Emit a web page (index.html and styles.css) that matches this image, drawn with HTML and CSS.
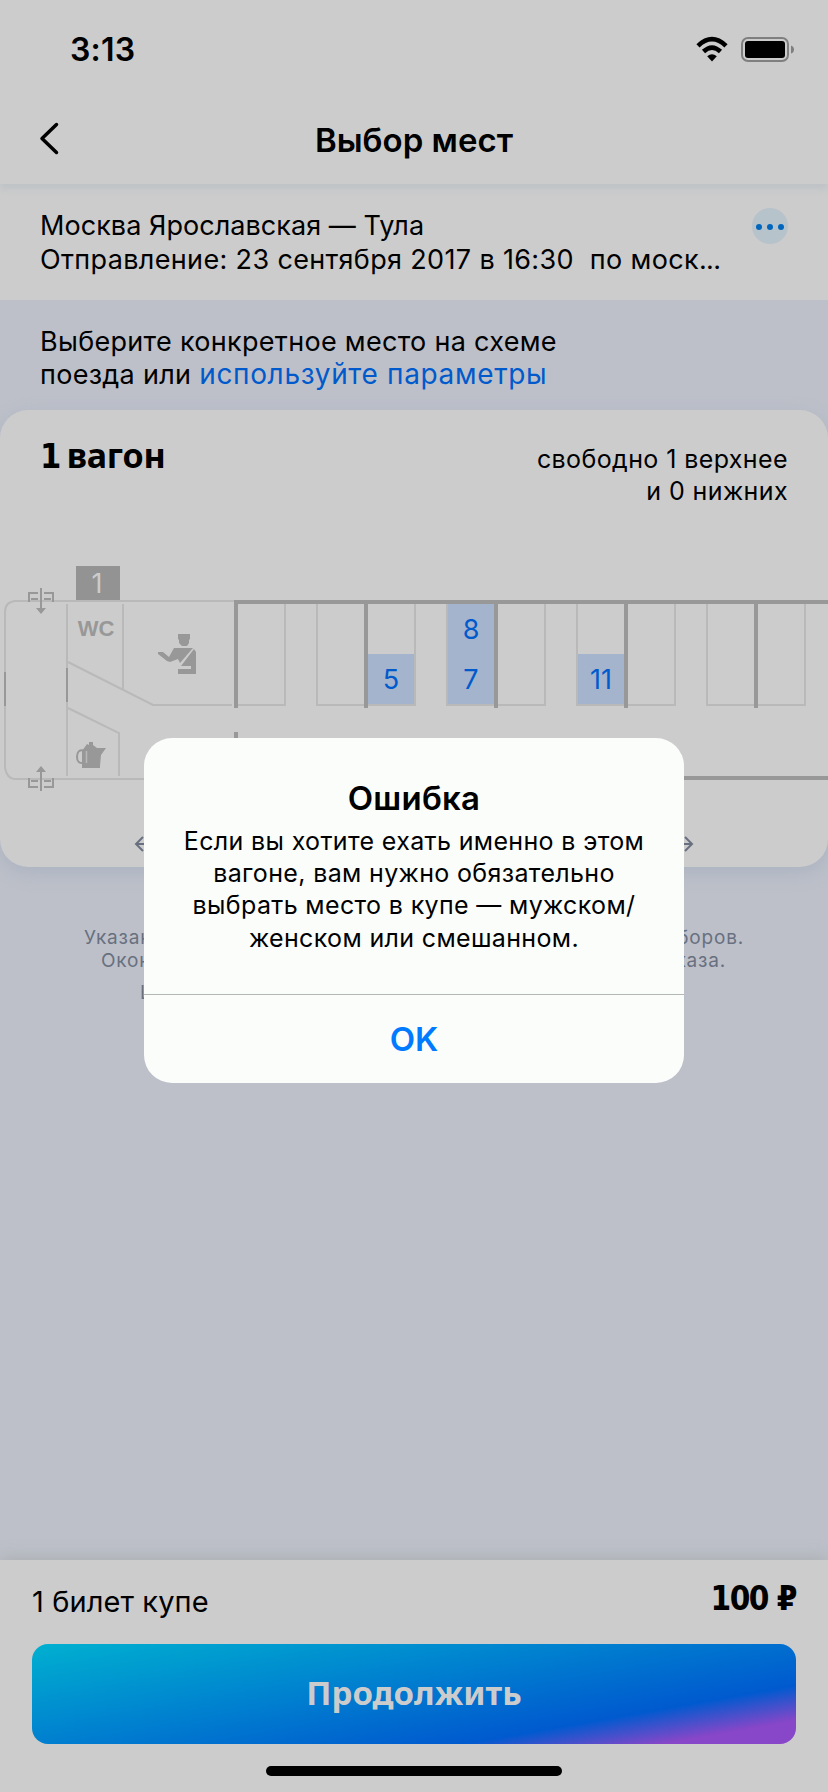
FILE: index.html
```
<!DOCTYPE html>
<html lang="ru">
<head>
<meta charset="utf-8">
<title>Выбор мест</title>
<link rel="stylesheet" href="styles.css">
</head>
<body>
<div class="screen">
  <header class="header">
    <div class="status">
      <span class="time">3:13</span>
      <div class="status-icons">
        <svg width="34" height="26" viewBox="0 0 34 26"><g fill="none" stroke="#000" stroke-width="4.600"><path d="M3 9.800Q17-3.500 31 9.800"/><path d="M8.500 15.500Q17 7.600 25.500 15.500"/></g><path d="M12.200 20.300Q17 16.300 21.800 20.300L17 25.500Z"/></svg>
        <svg width="54" height="26" viewBox="0 0 54 26"><rect x="1" y="2" width="46" height="23" rx="6" fill="none" stroke="#7f7f7f" stroke-width="2"/><rect x="4" y="5" width="40" height="17" rx="3"/><path d="M50 9.500q3 1 3 4t-3 4z" fill="#7f7f7f"/></svg>
      </div>
    </div>
    <div class="nav">
      <svg class="back" width="24" height="36" viewBox="0 0 24 36"><path d="M18.500 3.500L4 17.500L18.500 31.500" fill="none" stroke="#000" stroke-width="3.500" stroke-linecap="round" stroke-linejoin="round"/></svg>
      <h1 class="title">Выбор мест</h1>
    </div>
  </header>

  <section class="trip">
    <div class="trip-text">
      <div class="trip-route">Москва Ярославская — Тула</div>
      <div>Отправление: 23 сентября 2017 в 16:30&nbsp; по моск<span class="dots">...</span></div>
    </div>
    <div class="more"><i class="dot"></i><i class="dot"></i><i class="dot"></i></div>
  </section>

  <section class="hint">
    <div>Выберите конкретное место на схеме</div>
    <div>поезда или <a class="link">используйте параметры</a></div>
  </section>

  <section class="card">
    <div class="card-head">
      <h2 class="wagon"><span class="figure">1</span> вагон</h2>
      <div class="free">свободно 1 верхнее<br>и 0 нижних</div>
    </div>
    <svg class="scheme" width="828" height="327" viewBox="0 540 828 327">
      <!-- free places -->
      <g fill="#a3b4cc"><rect x="368" y="654" width="46" height="50"/><rect x="448" y="604" width="46" height="100"/><rect x="578" y="654" width="46" height="50"/></g>
      <!-- car outline, service rooms and berths -->
      <g fill="none" stroke="#b9b9b9" stroke-width="2">
        <path d="M236 601H15Q5 602 5 612V768Q7 778 14 779H240"/>
        <path d="M67 604V776M123 604V689M68 662L153 705H232M68 708L119 733V776"/>
        <path d="M238 705H285V604M317 604V705H415V604M447 604V705H545V604M577 604V705H675V604M707 604V705H805V604"/>
      </g>
      <!-- compartment walls -->
      <g fill="none" stroke="#989898" stroke-width="4">
        <path d="M236 708V602H828M366 602V708M496 602V708M626 602V708M756 602V708M236 732V778H828"/>
        <path stroke-width="2" d="M5 672V706M67 668V702"/>
      </g>
      <!-- doors -->
      <g fill="none" stroke="#989898" stroke-width="2">
        <path d="M41 588V610M38 593H29V602M31 599H38M44 593H53V602M51 599H44"/>
        <path d="M41 770V791M38 787H29V778M31 781H38M44 787H53V778M51 781H44"/>
      </g>
      <path fill="#989898" d="M36 608H46L41 614ZM36 772H46L41 766Z"/>
      <!-- conductor -->
      <g fill="#989898">
        <path d="M178 634H190V639L189 640V643L187 646H182L179 643V640L178 639Z"/>
        <path d="M174 648H193L180 663L178 659L170 662L167 661L158 654V652H163L169 657Z"/>
        <path d="M194 649L196 652V674H178V669H191V666H181Z"/>
      </g>
      <!-- kettle -->
      <g fill="#989898"><path d="M82 751L87 744L89 745V742H93V745L97 748H106L101 755L100 766V768H82Z"/><path d="M84 750.500Q77 749 77 757Q77 764 84 763" fill="none" stroke="#989898" stroke-width="2"/></g>
      <path d="M86.500 751V763" stroke="#b9b9b9" stroke-width="1.500"/>
      <!-- labels -->
      <rect x="76" y="566" width="44" height="34" fill="#939393"/>
      <text class="tag" x="97" y="593">1</text>
      <text class="wc" x="96" y="636">WC</text>
      <g class="place"><text x="391" y="689">5</text><text x="471" y="639">8</text><text x="471" y="689">7</text><text x="601" y="689">11</text></g>
      <path d="M150 844H136M143 837L136 844L143 851M678 844H692M685 837L692 844L685 851" fill="none" stroke="#687080" stroke-width="2"/>
    </svg>
  </section>

  <section class="notes">
    <div class="note note-a"><span>Указан</span><span>боров.</span></div>
    <div class="note note-b"><span>Окон</span><span>каза.</span></div>
    <div class="note note-c"><span>Ц</span><span>.</span></div>
  </section>

  <footer class="footer">
    <div class="total"><span class="ticket">1 билет купе</span><span class="price">100 ₽</span></div>
    <button class="go">Продолжить</button>
    <div class="home"></div>
  </footer>

  <div class="dialog">
    <h3 class="dialog-title">Ошибка</h3>
    <p class="dialog-text">Если вы хотите ехать именно в этом<br>вагоне, вам нужно обязательно<br>выбрать место в купе — мужском/<br>женском или смешанном.</p>
    <button class="ok">OK</button>
  </div>
</div>
</body>
</html>
```
FILE: styles.css
```
* { box-sizing: border-box; }
body { margin: 0; font-family: Inter, "Liberation Sans", sans-serif; color: #000; }
h1, h2, h3, p { margin: 0; }
button { border: 0; font: inherit; background: none; padding: 0; display: block; width: 100%; }
svg { display: block; }

.screen { position: relative; width: 828px; height: 1792px; background: #bdc0c9; display: flex; flex-direction: column; overflow: hidden; }

.header { height: 184px; background: #ccc; box-shadow: 0 5px 7px rgba(170, 180, 190, .4); position: relative; z-index: 1; }
.status { height: 120px; padding: 30px 33px 0 70px; display: flex; justify-content: space-between; align-items: flex-start; }
.time { font-size: 32px; line-height: 40px; font-weight: 600; letter-spacing: .2px; }
.status-icons { display: flex; gap: 12px; padding-top: 6px; }
.nav { display: grid; grid-template-columns: 62px 1fr 62px; height: 64px; }
.back { margin: 1px 0 0 38px; }
.title { font-size: 33px; line-height: 40px; font-weight: 600; text-align: center; }

.trip { height: 116px; padding: 24px 40px 0 40px; background: #ccc; display: flex; justify-content: space-between; }
.trip-text { padding-top: 1px; font-size: 27px; line-height: 34px; letter-spacing: .35px; white-space: nowrap; }
.trip-route { letter-spacing: .05px; }
.dots { letter-spacing: -.6px; }
.more { width: 36px; height: 36px; border-radius: 50%; background: #b7c3ca; display: flex; align-items: center; justify-content: center; gap: 5px; }
.dot { width: 6px; height: 6px; border-radius: 50%; background: #0065bd; margin-top: 1px; }

.hint { height: 110px; padding: 25px 40px 0; font-size: 27px; line-height: 33px; letter-spacing: .3px; white-space: nowrap; }
.link { font-size: 28px; letter-spacing: .65px; color: #005acc; }

.card { height: 457px; background: #ccc; border-radius: 28px; box-shadow: 0 6px 18px rgba(150, 165, 185, .45); }
.card-head { height: 130px; padding: 25px 40px 0; display: flex; justify-content: space-between; }
.wagon { font: 700 34px/40px "Noto Sans", sans-serif; letter-spacing: -.2px; word-spacing: -3px; }
.figure { font-family: "DejaVu Sans Condensed", "DejaVu Sans", sans-serif; }
.free { padding-top: 8px; font-size: 25px; line-height: 32px; letter-spacing: .4px; text-align: right; }

.tag { font-size: 27px; fill: #ccc; text-anchor: middle; }
.wc { font: 700 22px "Liberation Sans", sans-serif; fill: #989898; text-anchor: middle; }
.place { font-size: 27px; fill: #005acc; text-anchor: middle; }

.notes { flex: 1; padding-top: 59px; font-size: 19px; line-height: 23px; letter-spacing: .8px; color: #687080; }
.note { display: flex; justify-content: space-between; }
.note-a { padding: 0 84px; }
.note-b { padding: 0 102px 0 101px; }
.note-c { padding: 9px 142px 0 140px; }

.footer { height: 232px; padding: 0 32px; background: #ccc; box-shadow: 0 -2px 16px rgba(165, 170, 170, .8); }
.total { height: 84px; display: flex; justify-content: space-between; padding-top: 22px; line-height: 40px; white-space: nowrap; }
.ticket { font-size: 29px; letter-spacing: .1px; }
.price { font-family: "DejaVu Sans Condensed", "DejaVu Sans", sans-serif; font-weight: 700; font-size: 33px; letter-spacing: -1.5px; line-height: 34px; }
.go { height: 100px; border-radius: 16px; background: linear-gradient(170deg, #00b0d0 0%, #005acf 75%, #8846c8 90%); color: #ccc; font: 700 33px/97px "Noto Sans", sans-serif; padding-bottom: 4px; }
.home { width: 296px; height: 10px; border-radius: 5px; background: #000; margin: 22px auto 0; }

.dialog { position: absolute; z-index: 2; left: 144px; top: 738px; width: 540px; height: 345px; border-radius: 28px; background: #fbfdfb; text-align: center; overflow: hidden; }
.dialog-title { padding-top: 40px; font-size: 33px; line-height: 40px; font-weight: 600; letter-spacing: .2px; }
.dialog-text { padding-top: 7px; height: 176px; font-size: 25px; line-height: 32.200px; letter-spacing: .35px; white-space: nowrap; }
.ok { height: 89px; border-top: 1px solid #b2b8b5; font-size: 33px; line-height: 88px; font-weight: 600; color: #007aff; }
```
